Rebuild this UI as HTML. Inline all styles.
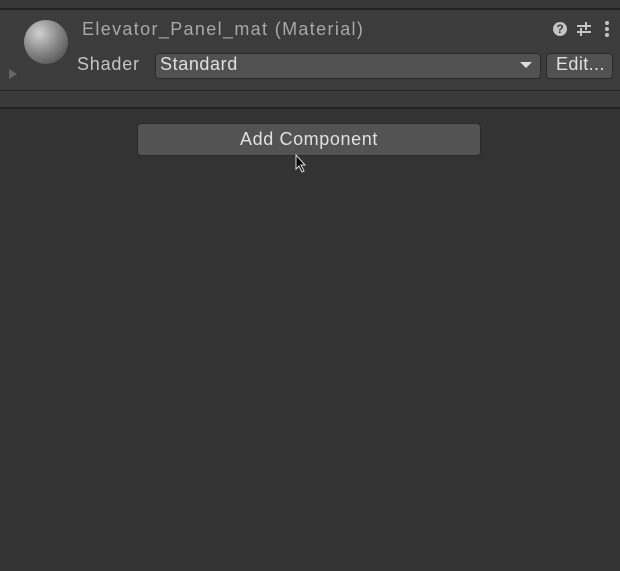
<html><head><style>
body{margin:0;width:620px;height:571px;background:#333333;font-family:"Liberation Sans",sans-serif;position:relative;overflow:hidden}
.a{position:absolute}
</style></head><body>
<div class="a" style="left:0;top:0;width:620px;height:8px;background:#383838"></div>
<div class="a" style="left:0;top:8px;width:620px;height:2px;background:#222"></div>
<div class="a" style="left:0;top:10px;width:620px;height:80px;background:#3c3c3c"></div>
<div class="a" style="left:0;top:90px;width:620px;height:1px;background:#232323"></div>
<div class="a" style="left:0;top:91px;width:620px;height:16px;background:#3a3a3a"></div>
<div class="a" style="left:0;top:107px;width:620px;height:2px;background:#232323"></div>
<div class="a" style="left:24px;top:20px;width:44px;height:44px;border-radius:50%;background:radial-gradient(circle at 35% 30%,#d0d0d0,#8a8a8a 45%,#4a4a4a 90%)"></div>
<div class="a" style="left:9px;top:69px;width:0;height:0;border-left:8px solid #666;border-top:5px solid transparent;border-bottom:5px solid transparent"></div>
<div class="a" style="left:82px;top:19px;color:#a8a8a8;font-size:18px;letter-spacing:1.35px">Elevator_Panel_mat (Material)</div>
<div class="a" style="left:77px;top:54px;color:#c4c4c4;font-size:18px;letter-spacing:0.8px">Shader</div>
<div class="a" style="left:155px;top:53px;width:384px;height:24px;background:#515151;border:1px solid #2a2a2a;border-radius:4px"></div>
<div class="a" style="left:160px;top:54px;color:#e0e0e0;font-size:18px;letter-spacing:0.6px">Standard</div>
<div class="a" style="left:520px;top:62px;width:0;height:0;border-top:6px solid #ddd;border-left:6px solid transparent;border-right:6px solid transparent"></div>
<div class="a" style="left:546px;top:53px;width:65px;height:24px;background:#515151;border:1px solid #2a2a2a;border-radius:4px"></div>
<div class="a" style="left:556px;top:54px;color:#e0e0e0;font-size:18px;letter-spacing:0.4px">Edit...</div>
<div class="a" style="left:553px;top:22px;width:14px;height:14px;border-radius:50%;background:#c4c4c4;color:#3c3c3c;font-size:12px;font-weight:bold;text-align:center;line-height:14px">?</div>
<svg class="a" style="left:576px;top:20px" width="16" height="18"><path d="M1 6h14M1 12h14M10 2v8M5 8v8" stroke="#c4c4c4" stroke-width="2"/></svg>
<svg class="a" style="left:604px;top:20px" width="6" height="18"><circle cx="3" cy="3" r="2" fill="#c4c4c4"/><circle cx="3" cy="9" r="2" fill="#c4c4c4"/><circle cx="3" cy="15" r="2" fill="#c4c4c4"/></svg>
<div class="a" style="left:137px;top:123px;width:342px;height:31px;background:#535353;border:1px solid #2a2a2a;border-radius:4px;color:#e0e0e0;font-size:18px;text-align:center;line-height:31px;letter-spacing:0.6px">Add Component</div>
<svg class="a" style="left:295px;top:154px" width="12" height="20"><path d="M1 1v14l3-3 3 6 2-1-3-6h4z" fill="#000" stroke="#ddd" stroke-width="1"/></svg>
</body></html>
